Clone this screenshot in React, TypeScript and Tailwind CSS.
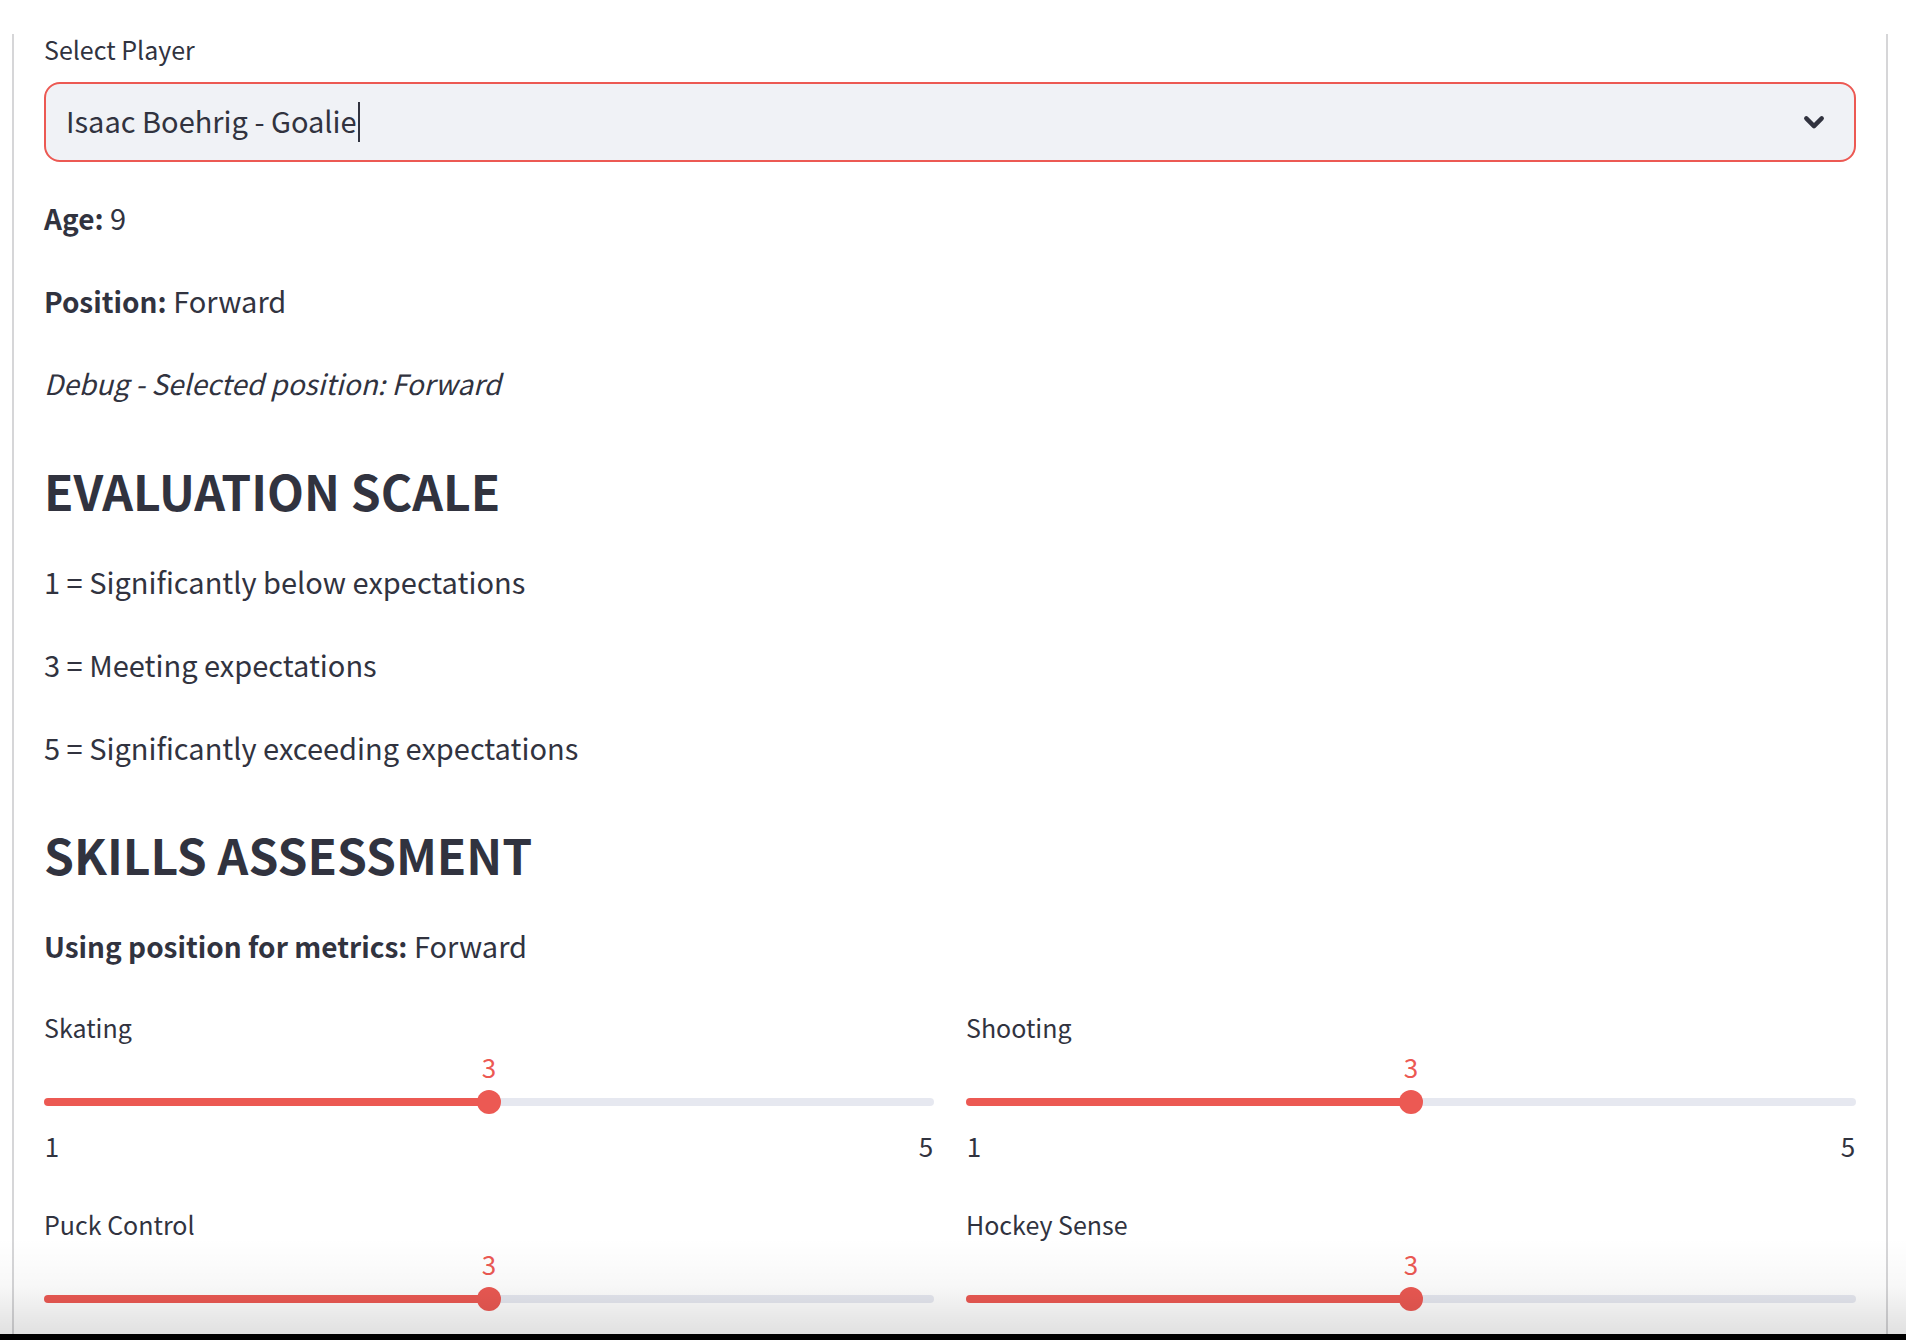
import { useState } from "react";

function Slider({ label, showRange = false }: { label: string; showRange?: boolean }) {
  const [value, setValue] = useState(3);
  const id = label.toLowerCase().replace(" ", "-");
  const percent = ((value - 1) / 4) * 100;
  return (
    <div className="min-w-0">
      <label htmlFor={id} className="block h-[43px] text-[25px] leading-10">
        {label}
      </label>
      <div className="h-9 text-center text-[26px] leading-[34px] text-[#ec5953]">
        <output htmlFor={id}>{value}</output>
      </div>
      <input
        id={id}
        type="range"
        min={1}
        max={5}
        value={value}
        onChange={(e) => setValue(Number(e.target.value))}
        style={{
          backgroundImage: `linear-gradient(to right, #ec5953 ${percent}%, #e6e8f0 ${percent}%)`,
        }}
        className="mt-3 block h-2 w-full appearance-none rounded-full outline-none [&::-webkit-slider-thumb]:size-6 [&::-webkit-slider-thumb]:appearance-none [&::-webkit-slider-thumb]:rounded-full [&::-webkit-slider-thumb]:bg-[#ec5953]"
      />
      {showRange && (
        <div className="mt-5 flex h-[42px] justify-between text-center text-[26px] leading-10">
          <span className="w-4">1</span>
          <span className="w-4">5</span>
        </div>
      )}
    </div>
  );
}

function Detail({ name, value }: { name: string; value: string }) {
  return (
    <p>
      <strong className="text-[28px] leading-none font-bold">{name}:</strong> {value}
    </p>
  );
}

export default function App() {
  const [player, setPlayer] = useState("Isaac Boehrig - Goalie");
  return (
    <div className="relative flex h-screen flex-col overflow-hidden bg-white pt-[34px] font-['Noto_Sans_CJK_SC',sans-serif] text-[#31333f]">
      <main className="mr-[18px] ml-3 min-h-0 flex-1 border-x-2 border-[#d6d6d8] px-[30px] text-[29px] leading-[51px]">
        <label htmlFor="player" className="block h-12 text-[25px] leading-[30px]">
          Select Player
        </label>
        <div className="flex h-20 items-center rounded-2xl border-2 border-[#ec5953] bg-[#f0f2f6] pr-[26px] pl-5">
          <input
            id="player"
            role="combobox"
            aria-expanded="false"
            value={player}
            onChange={(e) => setPlayer(e.target.value)}
            className="field-sizing-content bg-transparent pb-1 caret-transparent outline-none"
          />
          <span className="ml-px h-10 w-0.5 bg-[#31333f]" />
          <button type="button" aria-label="Open player list" className="ml-auto">
            <svg viewBox="0 0 24 24" className="size-7" fill="none" stroke="currentColor" strokeWidth="3.8" strokeLinecap="round" strokeLinejoin="round">
              <path d="M5.4 8.9l6.6 6.6 6.6-6.6" />
            </svg>
          </button>
        </div>
        <div className="mt-[30px] flex flex-col gap-8">
          <Detail name="Age" value="9" />
          <Detail name="Position" value="Forward" />
          <p className="text-[28px]"><em>Debug - Selected position: Forward</em></p>
          <h2 className="pt-6 pb-2 text-[48px] leading-[51px] font-bold">EVALUATION SCALE</h2>
          <p>1 = Significantly below expectations</p>
          <p>3 = Meeting expectations</p>
          <p>5 = Significantly exceeding expectations</p>
          <h2 className="pt-6 pb-2 text-[48px] leading-[51px] font-bold">SKILLS ASSESSMENT</h2>
          <Detail name="Using position for metrics" value="Forward" />
          <div className="mt-1 grid grid-cols-2 gap-x-8 gap-y-9">
            <Slider label="Skating" showRange />
            <Slider label="Shooting" showRange />
            <Slider label="Puck Control" />
            <Slider label="Hockey Sense" />
          </div>
        </div>
      </main>
      <div className="relative h-1.5 shrink-0 bg-black" />
      <div className="pointer-events-none absolute inset-x-0 bottom-1.5 h-24 bg-linear-to-b from-transparent via-black/3 to-black/12" />
    </div>
  );
}
